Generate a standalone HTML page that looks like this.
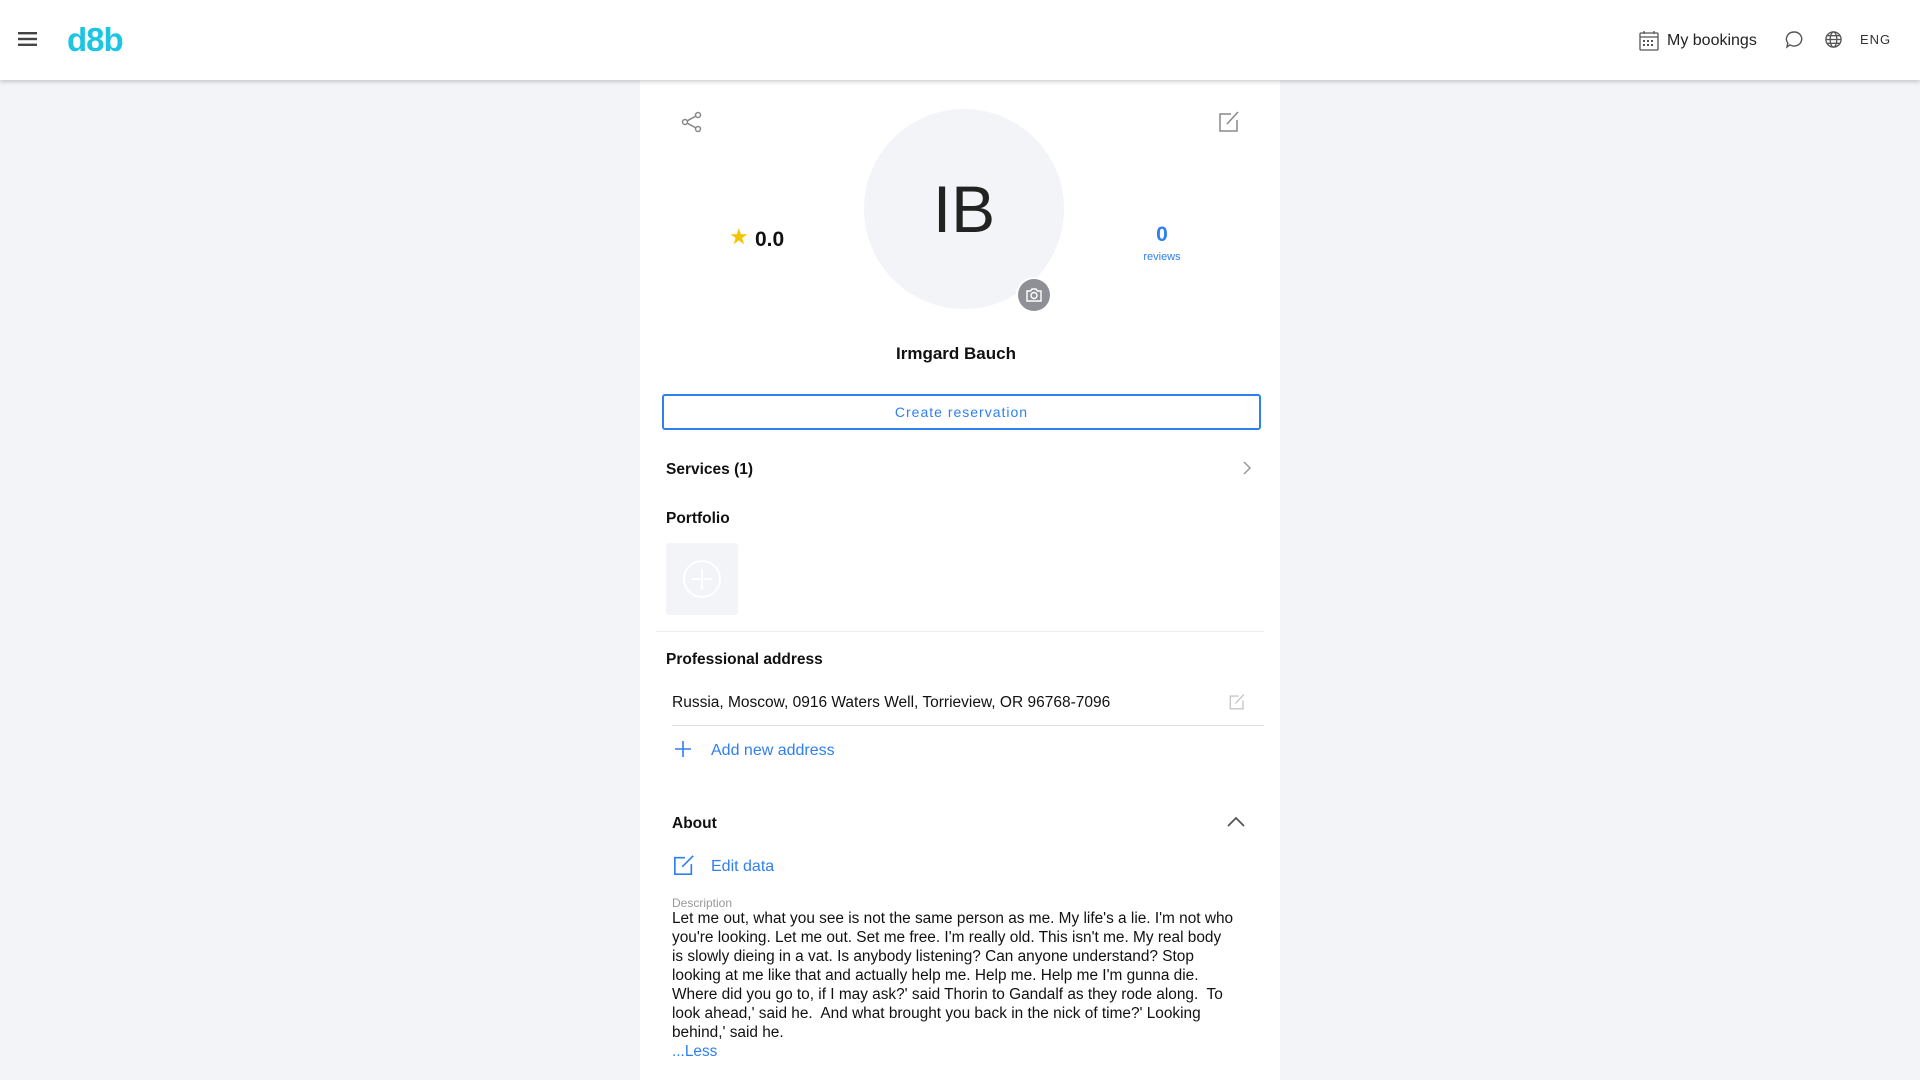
<!DOCTYPE html>
<html><head><meta charset="utf-8"><style>
*{margin:0;padding:0;box-sizing:border-box}
body{width:1920px;height:1080px;background:#f3f4f7;font-family:"Liberation Sans",sans-serif;position:relative;overflow:hidden;color:#111}
.hdr{position:absolute;left:0;top:0;width:1920px;height:80px;background:#fff;box-shadow:0 2px 4px rgba(0,0,0,.18);z-index:2}
.a{position:absolute;white-space:nowrap}
.card{position:absolute;left:640px;top:80px;width:640px;height:1000px;background:#fff}
.blue{color:#2f7ff0}
.b{font-weight:bold}
</style></head><body>
<div class="hdr">
 <svg class="a" style="left:18px;top:31px" width="20" height="16" viewBox="0 0 20 16"><rect y="1" width="19" height="2.4" fill="#444"/><rect y="6.8" width="19" height="2.4" fill="#444"/><rect y="12.6" width="19" height="2.4" fill="#444"/></svg>
 <div class="a" style="left:67px;top:21px;font-size:33px;font-weight:bold;color:#1cc6e3;letter-spacing:-1px">d8b</div>
 <svg class="a" style="left:1639px;top:30px" width="20" height="21" viewBox="0 0 20 21" fill="none" stroke="#555" stroke-width="1.3"><rect x="1" y="3" width="18" height="17" rx="1"/><line x1="1" y1="7" x2="19" y2="7"/><line x1="5" y1="1" x2="5" y2="4"/><line x1="15" y1="1" x2="15" y2="4"/><g fill="#555" stroke="none"><rect x="4" y="10" width="2" height="2"/><rect x="8" y="10" width="2" height="2"/><rect x="12" y="10" width="2" height="2"/><rect x="4" y="14" width="2" height="2"/><rect x="8" y="14" width="2" height="2"/><rect x="12" y="14" width="2" height="2"/></g></svg>
 <div class="a" style="left:1667px;top:32px;font-size:16px;color:#222">My bookings</div>
 <svg class="a" style="left:1784px;top:30px" width="20" height="20" viewBox="0 0 20 20" fill="none" stroke="#555" stroke-width="1.4"><path d="M10 2a7.5 7 0 1 1-4 12.8L3 17l.8-4A7.5 7 0 0 1 10 2z"/></svg>
 <svg class="a" style="left:1824px;top:30px" width="19" height="19" viewBox="0 0 20 20" fill="none" stroke="#555" stroke-width="1.4"><circle cx="10" cy="10" r="8"/><ellipse cx="10" cy="10" rx="3.5" ry="8"/><line x1="2" y1="10" x2="18" y2="10"/><path d="M3.5 6h13M3.5 14h13"/></svg>
 <div class="a" style="left:1860px;top:32px;font-size:13px;color:#333;letter-spacing:1px">ENG</div>
</div>
<div class="card">
 <svg class="a" style="left:40px;top:30px" width="24" height="24" viewBox="0 0 24 24" fill="none" stroke="#888" stroke-width="1.5"><circle cx="18" cy="5" r="2.5"/><circle cx="5" cy="12" r="2.5"/><circle cx="18" cy="19" r="2.5"/><path d="M7.2 10.8l8.6-4.6M7.2 13.2l8.6 4.6"/></svg>
 <svg class="a" style="left:577px;top:30px" width="24" height="24" viewBox="0 0 24 24" fill="none" stroke="#888" stroke-width="1.5"><path d="M14 4H3v17h17V10"/><path d="M10 14L21 2"/></svg>
 <div class="a" style="left:224px;top:29px;width:200px;height:200px;border-radius:50%;background:#f3f4f7"></div>
 <div class="a" style="left:224px;top:91px;width:200px;text-align:center;font-size:66px;color:#222">IB</div>
 <div class="a" style="left:376px;top:197px;width:36px;height:36px;border-radius:50%;background:#fff"></div>
 <div class="a" style="left:378px;top:199px;width:32px;height:32px;border-radius:50%;background:#8f9095"></div>
 <svg class="a" style="left:385px;top:206px" width="18" height="18" viewBox="0 0 18 18" fill="none" stroke="#fff" stroke-width="1.4"><path d="M2 5h3.5l1.5-2h4l1.5 2H16v10H2z"/><circle cx="9" cy="9.5" r="3"/></svg>
 <div class="a" style="left:89px;top:144px;font-size:22px;color:#f5c400">★</div>
 <div class="a b" style="left:115px;top:148px;font-size:21px">0.0</div>
 <div class="a b blue" style="left:500px;top:143px;width:44px;text-align:center;font-size:21px">0</div>
 <div class="a blue" style="left:490px;top:171px;width:64px;text-align:center;font-size:11px">reviews</div>
 <div class="a b" style="left:0;top:264px;width:640px;text-align:center;font-size:17px;padding-right:8px">Irmgard Bauch</div>
 <div class="a blue" style="left:22px;top:314px;width:599px;height:36px;border:2px solid #2f7ff0;border-radius:3px;text-align:center;line-height:32px;font-size:14px;letter-spacing:1px">Create reservation</div>
 <div class="a b" style="left:26px;top:381px;font-size:15.5px">Services (1)</div>
 <svg class="a" style="left:601px;top:380px" width="12" height="16" viewBox="0 0 12 16" fill="none" stroke="#999" stroke-width="1.5"><path d="M3 2l6 6-6 6"/></svg>
 <div class="a b" style="left:26px;top:430px;font-size:15.5px">Portfolio</div>
 <div class="a" style="left:26px;top:463px;width:72px;height:72px;background:#f3f4f7;border-radius:3px"></div>
 <svg class="a" style="left:42px;top:479px" width="40" height="40" viewBox="0 0 40 40" fill="none" stroke="#fff" stroke-width="2"><circle cx="20" cy="20" r="18"/><path d="M20 10v20M10 20h20"/></svg>
 <div class="a" style="left:16px;top:551px;width:608px;height:1px;background:#eee"></div>
 <div class="a b" style="left:26px;top:571px;font-size:15.5px">Professional address</div>
 <div class="a" style="left:32px;top:614px;font-size:15.5px;color:#111">Russia, Moscow, 0916 Waters Well, Torrieview, OR 96768-7096</div>
 <svg class="a" style="left:588px;top:613px" width="18" height="18" viewBox="0 0 24 24" fill="none" stroke="#bbb" stroke-width="1.5"><path d="M14 4H3v17h17V10"/><path d="M10 14L21 2"/></svg>
 <div class="a" style="left:32px;top:645px;width:592px;height:1px;background:#ddd"></div>
 <svg class="a" style="left:34px;top:660px" width="18" height="18" viewBox="0 0 18 18" stroke="#2f7ff0" stroke-width="1.6"><path d="M9 1v16M1 9h16"/></svg>
 <div class="a blue" style="left:71px;top:662px;font-size:16px">Add new address</div>
 <div class="a b" style="left:32px;top:735px;font-size:15.5px">About</div>
 <svg class="a" style="left:586px;top:735px" width="20" height="14" viewBox="0 0 20 14" fill="none" stroke="#555" stroke-width="1.8"><path d="M2 11l8-8 8 8"/></svg>
 <svg class="a" style="left:33px;top:774px" width="22" height="22" viewBox="0 0 24 24" fill="none" stroke="#2f7ff0" stroke-width="1.8"><path d="M13 4H2v18h18V11"/><path d="M10 14L22 2"/></svg>
 <div class="a blue" style="left:71px;top:778px;font-size:16px">Edit data</div>
 <div class="a" style="left:32px;top:816px;font-size:12px;color:#999">Description</div>
 <div class="a" style="left:32px;top:829px;font-size:15.4px;line-height:19px;color:#111">Let me out, what you see is not the same person as me. My life's a lie. I'm not who<br>you're looking. Let me out. Set me free. I'm really old. This isn't me. My real body<br>is slowly dieing in a vat. Is anybody listening? Can anyone understand? Stop<br>looking at me like that and actually help me. Help me. Help me I'm gunna die.<br>Where did you go to, if I may ask?' said Thorin to Gandalf as they rode along.&nbsp; To<br>look ahead,' said he.&nbsp; And what brought you back in the nick of time?' Looking<br>behind,' said he.<br><span class="blue">...Less</span></div>
</div>
</body></html>
